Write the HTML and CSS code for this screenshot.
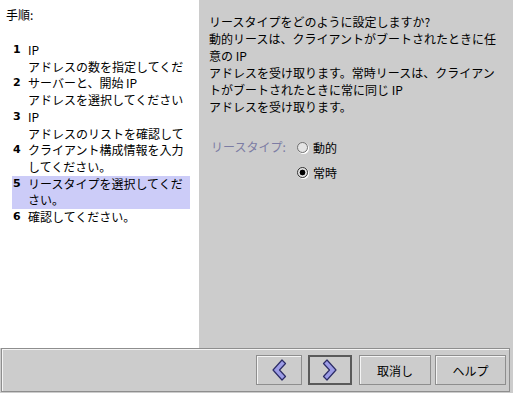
FILE: index.html
```html
<!DOCTYPE html>
<html lang="ja">
  <head>
    <meta charset="UTF-8">
    <title>リースタイプ</title>
    <link rel="stylesheet" href="styles.css">
  </head>
  <body>
    <div class="main">
        <div class="steps-panel">
            <p class="steps-title">手順:</p>
            <ol class="steps">
                <li class="step"><span class="step-num">1</span><span class="step-text">IP<br>アドレスの数を指定してくだ</span></li>
                <li class="step"><span class="step-num">2</span><span class="step-text">サーバーと、開始 IP<br>アドレスを選択してください</span></li>
                <li class="step"><span class="step-num">3</span><span class="step-text">IP<br>アドレスのリストを確認して</span></li>
                <li class="step"><span class="step-num">4</span><span class="step-text">クライアント構成情報を入力<br>してください。</span></li>
                <li class="step current"><span class="step-num">5</span><span class="step-text">リースタイプを選択してくだ<br>さい。</span></li>
                <li class="step"><span class="step-num">6</span><span class="step-text">確認してください。</span></li>
            </ol>
        </div>

        <div class="content">
            <p class="question">
                リースタイプをどのように設定しますか?<br>
                動的リースは、クライアントがブートされたときに任<br>
                意の IP<br>
                アドレスを受け取ります。常時リースは、クライアン<br>
                トがブートされたときに常に同じ IP<br>
                アドレスを受け取ります。
            </p>

            <div class="lease-type">
                <span class="lease-label">リースタイプ:</span>
                <div class="radios">
                    <label class="radio"><input type="radio" name="lease" class="radio-input">動的</label>
                    <label class="radio"><input type="radio" name="lease" class="radio-input" checked>常時</label>
                </div>
            </div>
        </div>
    </div>

    <div class="footer">
        <div class="footer-frame">
            <button class="btn btn-back">
                <svg width="16" height="22" viewBox="0 0 16 22"><path d="M11 1 L14.5 4.5 L8.5 11 L14.5 17.5 L11 21 L2 11 Z" fill="#9c9ce6" stroke="#2c2c66" stroke-width="1.2" stroke-linejoin="round"/></svg>
            </button>
            <button class="btn btn-next">
                <svg width="16" height="22" viewBox="0 0 16 22"><path d="M5 1 L1.5 4.5 L7.5 11 L1.5 17.5 L5 21 L14 11 Z" fill="#9c9ce6" stroke="#2c2c66" stroke-width="1.2" stroke-linejoin="round"/></svg>
            </button>
            <button class="btn btn-cancel">取消し</button>
            <button class="btn btn-help">ヘルプ</button>
        </div>
    </div>
  </body>
</html>
```

FILE: styles.css
```css
* {
    box-sizing: border-box;
}

body {
    margin: 0;
    width: 513px;
    height: 393px;
    overflow: hidden;
    background-color: #cccccc;
    font-family: "Noto Sans CJK JP", "DejaVu Sans", sans-serif;
    font-size: 12px;
    color: #000000;
}

.main {
    display: flex;
    height: 348px;
}

.steps-panel {
    width: 199px;
    background-color: #ffffff;
    padding-top: 7px;
}

.steps-title {
    margin: 0 0 19px 6px;
    line-height: 16px;
}

.steps {
    list-style: none;
    margin: 0;
    padding: 0 9px 0 12px;
}

.step {
    display: flex;
    line-height: 16.7px;
}

.step.current {
    background-color: #ccccf8;
}

.step-num {
    width: 16px;
    padding-left: 1px;
    font-family: "DejaVu Sans", sans-serif;
    font-weight: bold;
    font-size: 11px;
}

.step-text {
    white-space: nowrap;
}

.content {
    flex: 1;
    padding: 13px 10px 0 10px;
}

.question {
    margin: 0;
    line-height: 17px;
    white-space: nowrap;
}

.lease-type {
    display: flex;
    margin-top: 22px;
    padding-left: 2px;
}

.lease-label {
    width: 86px;
    line-height: 20px;
    color: #7c7ca4;
}

.radios {
    display: flex;
    flex-direction: column;
    gap: 5px;
}

.radio {
    display: flex;
    align-items: center;
    height: 20px;
}

.radio-input {
    appearance: none;
    width: 11px;
    height: 11px;
    margin: 0 5px 0 0;
    border: 1px solid #6f6f6f;
    border-radius: 50%;
    background-color: #e4e4e4;
    box-shadow: 1px 1px 0 #ffffff;
}

.radio-input:checked {
    background: radial-gradient(circle, #000000 0, #000000 2.6px, #e4e4e4 3.2px);
    border-color: #333333;
}

.footer {
    height: 45px;
    padding: 0 3px 1px 1px;
}

.footer-frame {
    display: flex;
    justify-content: flex-end;
    height: 44px;
    padding: 6px 3px 0 0;
    border: 1px solid #8e8e8e;
    box-shadow: inset 1px 1px 0 #f4f4f4;
}

.btn {
    display: flex;
    align-items: center;
    justify-content: center;
    height: 30px;
    padding: 0;
    margin-left: 6px;
    background-color: #cccccc;
    border: 1px solid #8e8e8e;
    box-shadow: inset 1px 1px 0 #f4f4f4;
    font-family: "Noto Sans CJK JP", sans-serif;
    font-size: 12px;
    color: #000000;
}

.btn-back {
    width: 46px;
}

.btn-next {
    width: 44px;
    border: 2px solid #5a5a5a;
    box-shadow: none;
}

.btn-cancel {
    width: 72px;
    margin-left: 7px;
}

.btn-help {
    width: 71px;
    margin-left: 4px;
}
```
